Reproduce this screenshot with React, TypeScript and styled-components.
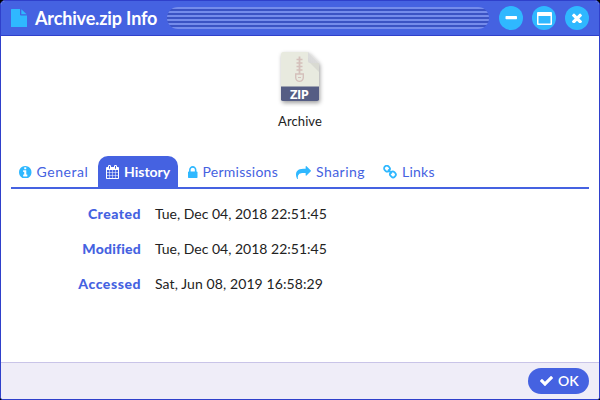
import React from 'react';
import styled, { createGlobalStyle } from 'styled-components';

const GlobalStyle = createGlobalStyle`
  * { box-sizing: border-box; }
  html, body { margin: 0; padding: 0; background: #000; }
  body { font-family: Lato, "Open Sans", sans-serif; overflow: hidden; }
`;

const Window = styled.div`
  width: 600px;
  height: 400px;
  display: flex;
  flex-direction: column;
  background: #fff;
  border: 1px solid #2f40cb;
  border-radius: 5px 5px 3px 3px;
  overflow: hidden;
`;

const TitleBar = styled.header`
  height: 35px;
  flex: none;
  display: flex;
  align-items: center;
  padding: 0 10px;
  background: #4562e1;
  border-bottom: 1px solid #2f40cb;
`;

const Title = styled.h1<{ $spacing: number }>`
  width: 132px;
  margin: 0 0 0 8px;
  color: #fff;
  font-size: 18px;
  font-weight: 700;
  line-height: 34px;
  letter-spacing: ${(p) => p.$spacing}px;
  white-space: nowrap;
`;

const Grip = styled.div`
  flex: 1;
  height: 22px;
  border-radius: 11px;
  background: repeating-linear-gradient(#758ceb 0 2px, #3b53c4 2px 4px);
`;

const WindowButtons = styled.div`
  display: flex;
  gap: 9px;
  margin-left: 10px;
`;

const RoundButton = styled.button`
  width: 24px;
  height: 24px;
  display: flex;
  align-items: center;
  justify-content: center;
  padding: 0;
  border: 0;
  border-radius: 50%;
  background: #2fb8ff;
  color: #fff;
`;

const Summary = styled.section`
  height: 120px;
  flex: none;
  display: flex;
  flex-direction: column;
  align-items: center;
  padding-top: 11px;
`;

const FileName = styled.div`
  margin-top: 4px;
  color: #222;
  font-size: 13px;
  line-height: 20px;
  letter-spacing: 0.1px;
`;

const TabBar = styled.nav`
  height: 33px;
  flex: none;
  display: flex;
  gap: 2px;
  margin: 0 10px;
  border-bottom: 2px solid #4562e1;
`;

const Tab = styled.div<{ $active?: boolean; $width: number; $spacing: number }>`
  width: ${(p) => p.$width}px;
  display: flex;
  align-items: center;
  gap: 5px;
  padding: 1px 0 0 8px;
  border-radius: 10px 10px 0 0;
  background: ${(p) => (p.$active ? '#4562e1' : 'transparent')};
  color: ${(p) => (p.$active ? '#fff' : '#4562e1')};
  font-size: 14px;
  font-weight: ${(p) => (p.$active ? 700 : 400)};
  letter-spacing: ${(p) => p.$spacing}px;
  white-space: nowrap;
  svg { flex: none; color: ${(p) => (p.$active ? '#fff' : '#2fb8ff')}; }
`;

const TabLabel = styled.span`
  padding-bottom: 2px;
`;

const Details = styled.dl`
  flex: 1;
  display: grid;
  grid-template-columns: 140px 1fr;
  grid-auto-rows: 35px;
  align-items: center;
  column-gap: 14px;
  margin: 0;
  padding-top: 7px;
  font-size: 14px;
`;

const Term = styled.dt<{ $spacing: number }>`
  text-align: right;
  color: #4562e1;
  font-weight: 900;
  letter-spacing: ${(p) => p.$spacing}px;
`;

const Value = styled.dd<{ $spacing: number }>`
  margin: 0;
  color: #222;
  letter-spacing: ${(p) => p.$spacing}px;
`;

const Footer = styled.footer`
  height: 37px;
  flex: none;
  display: flex;
  justify-content: flex-end;
  align-items: center;
  padding: 0 10px 0 0;
  background: #efedf8;
  border-top: 1px solid #c9c4e8;
`;

const OkButton = styled.button`
  width: 61px;
  height: 26px;
  display: flex;
  align-items: center;
  gap: 5px;
  padding: 0 0 0 12px;
  border: 0;
  border-radius: 13px;
  background: #4562e1;
  color: #fff;
  font: 600 14px Lato, sans-serif;
`;

const glyphs = {
  info: 'M1152 1376v-160q0-14-9-23t-23-9h-96v-512q0-14-9-23t-23-9h-320q-14 0-23 9t-9 23v160q0 14 9 23t23 9h96v320h-96q-14 0-23 9t-9 23v160q0 14 9 23t23 9h448q14 0 23-9t9-23zm-128-896v-160q0-14-9-23t-23-9h-192q-14 0-23 9t-9 23v160q0 14 9 23t23 9h192q14 0 23-9t9-23zm640 416q0 209-103 385.5t-279.5 279.5-385.5 103-385.5-103-279.5-279.5-103-385.5 103-385.5 279.5-279.5 385.5-103 385.5 103 279.5 279.5 103 385.5z',
  calendar: 'M192 1664h288v-288h-288v288zm352 0h320v-288h-320v288zm-352-352h288v-320h-288v320zm352 0h320v-320h-320v320zm-352-384h288v-288h-288v288zm736 736h320v-288h-320v288zm-384-736h320v-288h-320v288zm768 736h288v-288h-288v288zm-384-352h320v-320h-320v320zm-352-864v-288q0-13-9.5-22.5t-22.5-9.5h-64q-13 0-22.5 9.5t-9.5 22.5v288q0 13 9.5 22.5t22.5 9.5h64q13 0 22.5-9.5t9.5-22.5zm736 864h288v-320h-288v320zm-384-384h320v-288h-320v288zm384 0h288v-288h-288v288zm32-480v-288q0-13-9.5-22.5t-22.5-9.5h-64q-13 0-22.5 9.5t-9.5 22.5v288q0 13 9.5 22.5t22.5 9.5h64q13 0 22.5-9.5t9.5-22.5zm384-64v1280q0 52-38 90t-90 38h-1408q-52 0-90-38t-38-90v-1280q0-52 38-90t90-38h128v-96q0-66 47-113t113-47h64q66 0 113 47t47 113v96h384v-96q0-66 47-113t113-47h64q66 0 113 47t47 113v96h128q52 0 90 38t38 90z',
  lock: 'M640 768h512v-192q0-106-75-181t-181-75-181 75-75 181v192zm832 96v576q0 40-28 68t-68 28h-960q-40 0-68-28t-28-68v-576q0-40 28-68t68-28h32v-192q0-184 132-316t316-132 316 132 132 316v192h32q40 0 68 28t28 68z',
  share: 'M1792 640q0 26-19 45l-512 512q-19 19-45 19t-45-19-19-45v-256h-224q-98 0-175.5 6t-154 21.5-133 42.5-105.5 69.5-80 101-48.5 138.5-17.5 181q0 55 5 123 0 6 2.5 23.5t2.5 26.5q0 15-8.5 25t-23.5 10q-16 0-28-17-7-9-13-22t-13.5-30-10.5-24q-127-285-127-451 0-199 53-333 162-403 875-403h224v-256q0-26 19-45t45-19 45 19l512 512q19 19 19 45z',
  check: 'M1671 566q0 40-28 68l-724 724-136 136q-28 28-68 28t-68-28l-136-136-362-362q-28-28-28-68t28-68l136-136q28-28 68-28t68 28l294 295 656-657q28-28 68-28t68 28l136 136q28 28 28 68z',
  times: 'M1490 1322q0 40-28 68l-136 136q-28 28-68 28t-68-28l-294-294-294 294q-28 28-68 28t-68-28l-136-136q-28-28-28-68t28-68l294-294-294-294q-28-28-28-68t28-68l136-136q28-28 68-28t68 28l294 294 294-294q28-28 68-28t68 28l136 136q28 28 28 68t-28 68l-294 294 294 294q28 28 28 68z',
};

function Glyph({ name, width, height, box }: { name: keyof typeof glyphs; width: number; height: number; box: string }) {
  return (
    <svg width={width} height={height} viewBox={box} fill="currentColor" preserveAspectRatio="none">
      <path d={glyphs[name]} />
    </svg>
  );
}

function LinkIcon() {
  return (
    <svg width="14" height="14" viewBox="0 0 14 14" fill="none" stroke="currentColor" strokeWidth="1.8">
      <rect x="1.1" y="1" width="5.8" height="5.2" rx="2.4" transform="rotate(45 4 3.6)" />
      <rect x="7" y="6.8" width="5.8" height="5.2" rx="2.4" transform="rotate(45 9.9 9.4)" />
      <path d="M5 4.700l3.800 3.600" />
    </svg>
  );
}

function ZipIcon() {
  return (
    <svg width="56" height="60" viewBox="0 0 56 60">
      <defs>
        <filter id="shadow" x="-20%" y="-20%" width="150%" height="150%">
          <feDropShadow dx="1" dy="2" stdDeviation="2" floodColor="#000" floodOpacity=".38" />
        </filter>
        <linearGradient id="fold" x1="0" y1="1" x2="1" y2="0">
          <stop offset="0" stopColor="#d6d6d6" />
          <stop offset="1" stopColor="#e2e2e2" />
        </linearGradient>
      </defs>
      <g filter="url(#shadow)">
        <path d="M11 5H36L47 16V52q0 2-2 2H11q-2 0-2-2V7q0-2 2-2z" fill="#e8eadf" />
      </g>
      <path d="M38 16h9v9z" fill="#d5d6ce" opacity=".8" />
      <path d="M36 5L47 16H38q-2 0-2-2z" fill="url(#fold)" />
      <path d="M9 39.500H47V52.500q0 1.500-2 1.500H11q-2 0-2-1.500z" fill="#555d84" />
      <g stroke="#d4c0bb" fill="none">
        <path d="M27.500 9.500V27" strokeWidth="1.800" />
        <path d="M24.500 12.500h6M24.500 16h6M24.500 19.500h6M24.500 23h6" strokeWidth="1.300" />
        <path d="M23.700 27h7.600v3.600a3.800 3.800 0 0 1-7.600 0z" strokeWidth="1.400" />
        <path d="M26 30.500h3" strokeWidth="1.200" />
      </g>
      <text x="27.500" y="51.500" textAnchor="middle" textLength="19" fill="#fff" fontFamily="Open Sans, sans-serif" fontSize="13" fontWeight="700">ZIP</text>
    </svg>
  );
}

export default function App() {
  return (
    <>
      <GlobalStyle />
      <Window>
        <TitleBar>
          <svg width="16" height="18" viewBox="0 0 16 18" fill="#2fb8ff">
            <path d="M.5 0H9v5.500q0 1 1 1h6V17.500q0 .5-.5.500H.5q-.5 0-.5-.500V.5Q0 0 .5 0z" />
            <path d="M10.300 0.300L15.700 5.300H10.300z" />
          </svg>
          <Title $spacing={-0.15}>Archive.zip Info</Title>
          <Grip />
          <WindowButtons>
            <RoundButton aria-label="Minimize">
              <svg width="12" height="12" viewBox="0 0 12 12"><rect x=".5" y="4" width="11.500" height="3.200" rx=".7" fill="#fff" /></svg>
            </RoundButton>
            <RoundButton aria-label="Maximize">
              <svg width="15" height="13" viewBox="0 0 15 13"><path fillRule="evenodd" d="M1 0h13q1 0 1 1v11q0 1-1 1H1q-1 0-1-1V1q0-1 1-1zM1.500 4v7.500h12V4z" fill="#fff" /></svg>
            </RoundButton>
            <RoundButton aria-label="Close">
              <Glyph name="times" width={10} height={10} box="302 302 1188 1188" />
            </RoundButton>
          </WindowButtons>
        </TitleBar>
        <Summary>
          <ZipIcon />
          <FileName>Archive</FileName>
        </Summary>
        <TabBar>
          <Tab $width={85} $spacing={0.55}><Glyph name="info" width={12.500} height={12.500} box="128 128 1536 1536" /><TabLabel>General</TabLabel></Tab>
          <Tab $width={80} $spacing={0} $active><Glyph name="calendar" width={13} height={14} box="64 0 1664 1792" /><TabLabel>History</TabLabel></Tab>
          <Tab $width={106} $spacing={0.25}><Glyph name="lock" width={9.500} height={12} box="320 128 1152 1408" /><TabLabel>Permissions</TabLabel></Tab>
          <Tab $width={85} $spacing={0.45}><Glyph name="share" width={15} height={13} box="0 64 1792 1540" /><TabLabel>Sharing</TabLabel></Tab>
          <Tab $width={67} $spacing={0.25}><LinkIcon /><TabLabel>Links</TabLabel></Tab>
        </TabBar>
        <Details>
          <Term $spacing={0.5}>Created</Term>
          <Value $spacing={0}>Tue, Dec 04, 2018 22:51:45</Value>
          <Term $spacing={0.2}>Modified</Term>
          <Value $spacing={0}>Tue, Dec 04, 2018 22:51:45</Value>
          <Term $spacing={0.55}>Accessed</Term>
          <Value $spacing={0.1}>Sat, Jun 08, 2019 16:58:29</Value>
        </Details>
        <Footer>
          <OkButton><Glyph name="check" width={13} height={10} box="121 334 1550 1188" /><TabLabel>OK</TabLabel></OkButton>
        </Footer>
      </Window>
    </>
  );
}
